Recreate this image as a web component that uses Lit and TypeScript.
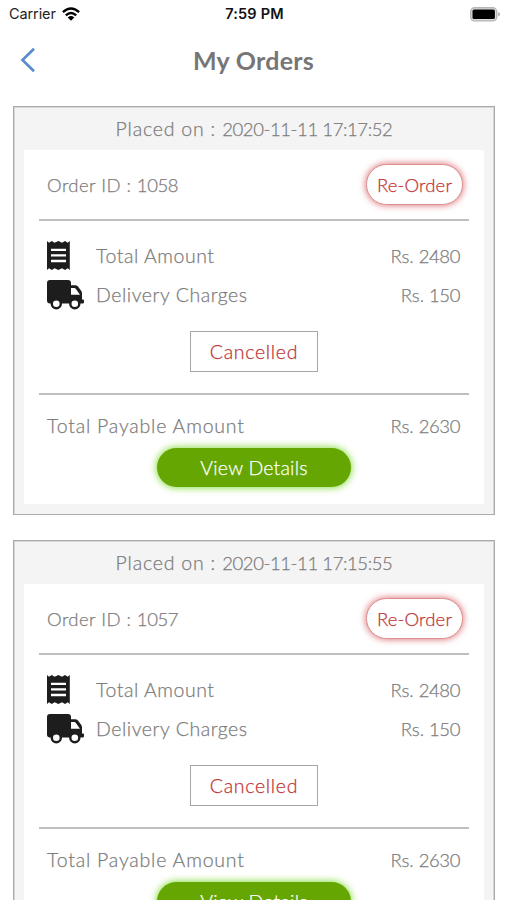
import { LitElement, html, css } from "lit";
import { customElement, property } from "lit/decorators.js";

interface Order {
  id: number;
  placed: string;
  amount: number;
  delivery: number;
  status: string;
}

const ORDERS: Order[] = [
  { id: 1058, placed: "2020-11-11 17:17:52", amount: 2480, delivery: 150, status: "Cancelled" },
  { id: 1057, placed: "2020-11-11 17:15:55", amount: 2480, delivery: 150, status: "Cancelled" },
];

@customElement("order-card")
export class OrderCard extends LitElement {
  @property({ attribute: false }) order!: Order;

  static styles = css`
    :host {
      display: block;
      box-sizing: border-box;
      height: 409px;
      border: 1px solid #aaa;
      box-shadow: inset 1px 1px 0 #d6d6d6, inset -1px 0 0 #d6d6d6;
      background: #f4f4f4;
      padding: 1px 10px 10px;
      color: #7c7c7c;
      font-family: Lato, "Century Gothic", sans-serif;
      font-weight: 300;
      font-size: 18.5px;
      line-height: 24px;
      white-space: nowrap;
      -webkit-text-stroke: 0.25px currentColor;
    }
    .placed { height: 41.5px; line-height: 41px; text-align: center; }
    .body { height: 354.5px; background: #fff; padding: 0 15px; box-sizing: border-box; }
    .head, .row { display: flex; justify-content: space-between; align-items: center; padding: 0 9px 0 8px; }
    .head { height: 69px; padding-right: 6px; }
    .reorder {
      box-sizing: border-box; width: 97px; height: 41px; border-radius: 20.5px;
      border: 1px solid #dc8f8f; box-shadow: 0 0 6px 1px rgba(205, 50, 60, 0.6);
      color: #c03434; font: inherit; background: #fff; padding: 1px 0 0; text-align: center;
    }
    .rule { height: 2px; background: #bfbfbf; }
    .lines { padding-top: 16px; height: 78px; }
    .row { height: 39px; }
    .label { display: flex; align-items: center; }
    .icon { width: 49px; height: 31px; display: block; margin-bottom: 2px; }
    .status {
      box-sizing: border-box; width: 128px; height: 41px; margin: 16px auto 21px;
      border: 1.5px solid #a6a6a6; color: #c03434; line-height: 39px; text-align: center;
    }
    .total { height: 32px; padding-top: 15px; }
    .view {
      display: block; box-sizing: border-box; width: 194px; height: 39px; margin: 6px auto 0; border: 0; padding: 2px 0 0;
      border-radius: 19.5px; background: #65a603; box-shadow: 0 0 7px 1px rgba(100, 210, 10, 0.75);
      color: #fff; font: inherit;
    }
    .t-placed { font-size: 19.5px; letter-spacing: 0.8px; }
    .date { letter-spacing: -0.4px; }
    .t-id { letter-spacing: 0.45px; padding-top: 2px; }
    .t-amt, .t-del { font-size: 19.5px; letter-spacing: 0.55px; }
    .t-tot { font-size: 19.5px; letter-spacing: 0.8px; }
    .t-st { font-size: 19.5px; letter-spacing: 0.7px; }
    .t-re { letter-spacing: 0.15px; }
    .t-view { font-size: 19.5px; letter-spacing: 0.2px; }
    .num { letter-spacing: -0.4px; }
  `;

  render() {
    const o = this.order;
    return html`
      <div class="placed"><span class="t-placed">Placed on : </span><span class="date">${o.placed}</span></div>
      <div class="body">
        <div class="head">
          <span class="t-id">Order ID : <span class="num">${o.id}</span></span>
          <button class="reorder"><span class="t-re">Re-Order</span></button>
        </div>
        <div class="rule"></div>
        <div class="lines">
          <div class="row">
            <span class="label">
              <svg class="icon" viewBox="0 0 49 31" fill="#1d1d1d">
                <path fill-rule="evenodd" d="M0 1 2 2.8 4.8 1 7.6 2.8 11.4 1 15 2.8 18 1 20.8 2.8 22.8 1V30L20.8 28.2 18 30 15 28.2 11.4 30 7.6 28.2 4.8 30 2 28.2 0 30ZM4 8.7V11H19V8.7ZM4 14.2V16.6H19V14.2ZM4 19.8V22.2H19V19.8Z" />
              </svg>
              <span class="t-amt">Total Amount</span>
            </span>
            <span>Rs. <span class="num">${o.amount}</span></span>
          </div>
          <div class="row">
            <span class="label">
              <svg class="icon" viewBox="0 0 49 31">
                <path fill="#1d1d1d" fill-rule="evenodd" d="M3 1H21Q24 1 24 4V6.2H28Q29.8 6.2 31 7.6L34.3 12Q35 13 35 14.5V20.5H36Q37 20.5 37 21.5V23.2Q37 24.5 35.5 24.5H3Q0 24.5 0 21.5V4Q0 1 3 1ZM24 9V15.7H33L28.7 9.7Q28.2 9 27.3 9Z" />
                <circle cx="9.3" cy="24.8" r="4.5" fill="#fff" stroke="#1d1d1d" stroke-width="2.4" />
                <circle cx="27.8" cy="24.8" r="4.5" fill="#fff" stroke="#1d1d1d" stroke-width="2.4" />
              </svg>
              <span class="t-del">Delivery Charges</span>
            </span>
            <span>Rs. <span class="num">${o.delivery}</span></span>
          </div>
        </div>
        <div class="status"><span class="t-st">${o.status}</span></div>
        <div class="rule"></div>
        <div class="row total">
          <span class="t-tot">Total Payable Amount</span>
          <span>Rs. <span class="num">${o.amount + o.delivery}</span></span>
        </div>
        <button class="view"><span class="t-view">View Details</span></button>
      </div>
    `;
  }
}

@customElement("app-root")
export class AppRoot extends LitElement {
  static styles = css`
    :host { display: block; height: 900px; overflow: hidden; background: #fff; }
    .bar {
      display: grid; grid-template-columns: 1fr auto 1fr; align-items: center; height: 28px;
      padding: 0 7px 0 9px; font: 14.5px/28px Inter, sans-serif; color: #222;
    }
    .carrier { display: flex; align-items: center; gap: 6px; letter-spacing: -0.1px; }
    .time { font-weight: 600; color: #111; letter-spacing: 0.2px; }
    .battery { justify-self: end; display: block; }
    .nav { display: grid; grid-template-columns: 1fr auto 1fr; align-items: center; height: 64px; padding: 0 20px; }
    .back { display: block; }
    .title { margin: 0; font: 700 25px/30px Lato, "Century Gothic", sans-serif; color: #767676; letter-spacing: 0.25px; }
    .list { display: grid; gap: 25px; padding: 14px 12px 0 13px; }
  `;

  render() {
    return html`
      <div class="bar">
        <span class="carrier">Carrier
          <svg width="18" height="14" viewBox="0 0 18 14" fill="none" stroke="#000" stroke-width="2.4">
            <path d="M.9 5.2Q9-2 17.1 5.2M3.8 8.3Q9 3.7 14.2 8.3" />
            <path d="M9 13.8 5.7 10.4Q9 7.6 12.3 10.4Z" fill="#000" stroke="none" />
          </svg>
        </span>
        <span class="time">7:59 PM</span>
        <svg class="battery" width="30" height="15" viewBox="0 0 30 15">
          <rect x=".7" y=".7" width="26" height="13.2" rx="4" fill="#ddd" stroke="#b5b5b5" stroke-width="1.4" />
          <rect x="2.5" y="2.5" width="22.4" height="9.6" rx="1.6" fill="#000" />
          <path d="M28.2 5V9.6Q30 8.8 30 7.3T28.2 5Z" fill="#aaa" />
        </svg>
      </div>
      <div class="nav">
        <svg class="back" width="16" height="26" viewBox="0 0 16 26" fill="none" stroke="#5b8bcb" stroke-width="2.7">
          <path d="M14 1.8 2.5 13 14 24.2" />
        </svg>
        <h1 class="title">My Orders</h1>
      </div>
      <div class="list">${ORDERS.map((o) => html`<order-card .order=${o}></order-card>`)}</div>
    `;
  }
}
